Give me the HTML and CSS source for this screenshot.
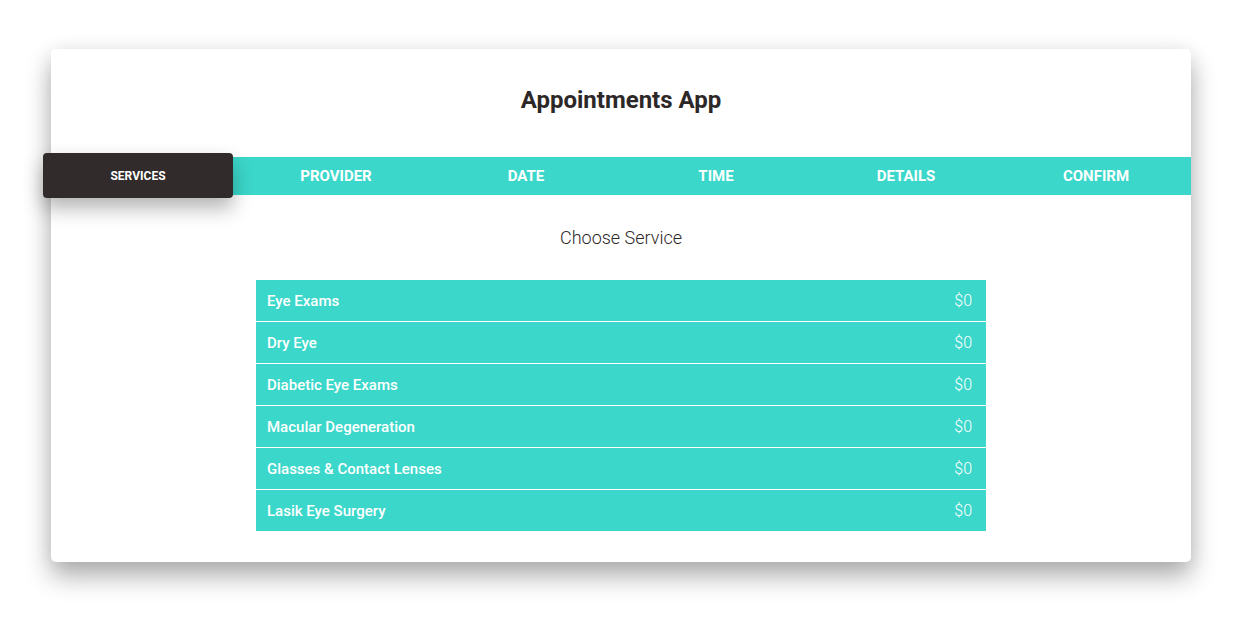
FILE: index.html
```html
<!DOCTYPE html>
<html lang="en">
<head>
    <meta charset="UTF-8">
    <meta name="viewport" content="width=device-width, initial-scale=1.0">
    <title>Appointments App</title>
    <link rel="stylesheet" href="styles.css">
</head>
<body>

<div class="app">
    <h1 class="title">Appointments App</h1>

    <nav class="steps">
        <div class="step active">Services</div>
        <div class="step">Provider</div>
        <div class="step">Date</div>
        <div class="step">Time</div>
        <div class="step">Details</div>
        <div class="step">Confirm</div>
    </nav>

    <h2 class="subtitle">Choose Service</h2>

    <ul class="services">
        <li><span>Eye Exams</span><span class="price">$0</span></li>
        <li><span>Dry Eye</span><span class="price">$0</span></li>
        <li><span>Diabetic Eye Exams</span><span class="price">$0</span></li>
        <li><span>Macular Degeneration</span><span class="price">$0</span></li>
        <li><span>Glasses &amp; Contact Lenses</span><span class="price">$0</span></li>
        <li><span>Lasik Eye Surgery</span><span class="price">$0</span></li>
    </ul>
</div>

</body>
</html>
```

FILE: styles.css
```css
body {
    margin: 0;
    padding: 49px 0 60px 51px;
    background: #fff;
    font-family: Roboto, "Liberation Sans", sans-serif;
}
.app {
    width: 1140px;
    padding-bottom: 31px;
    background: #fff;
    border-radius: 5px;
    box-shadow: 0 14px 26px rgba(0, 0, 0, 0.32), 0 0 20px rgba(0, 0, 0, 0.06);
}
.title {
    margin: 0;
    padding-top: 38px;
    height: 26px;
    line-height: 26px;
    font-size: 24px;
    font-weight: 700;
    text-align: center;
    color: #2d2828;
}
.steps {
    display: grid;
    grid-template-columns: repeat(6, 1fr);
    height: 38px;
    margin-top: 44px;
    background: #3bd7ca;
}
.step {
    display: flex;
    align-items: center;
    justify-content: center;
    color: #fff;
    font-size: 15px;
    font-weight: 700;
    text-transform: uppercase;
}
.step.active {
    margin: -4px 8px -3px -8px;
    background: #312b2b;
    border-radius: 4px;
    font-size: 12px;
    box-shadow: 0 10px 20px rgba(0, 0, 0, 0.3);
}
.subtitle {
    margin: 31px 0 0;
    line-height: 24px;
    font-size: 18px;
    font-weight: 300;
    text-align: center;
    color: #2d2828;
}
.services {
    list-style: none;
    width: 730px;
    margin: 30px auto 0;
    padding: 0;
}
.services li {
    display: flex;
    justify-content: space-between;
    align-items: center;
    height: 41px;
    padding: 0 14px 0 11px;
    background: #3bd7ca;
    border-bottom: 1px solid #fff;
    color: #fff;
    font-size: 15px;
    font-weight: 500;
}
.services li:last-child {
    border-bottom: none;
}
.price {
    font-size: 16px;
    font-weight: 300;
}
```
